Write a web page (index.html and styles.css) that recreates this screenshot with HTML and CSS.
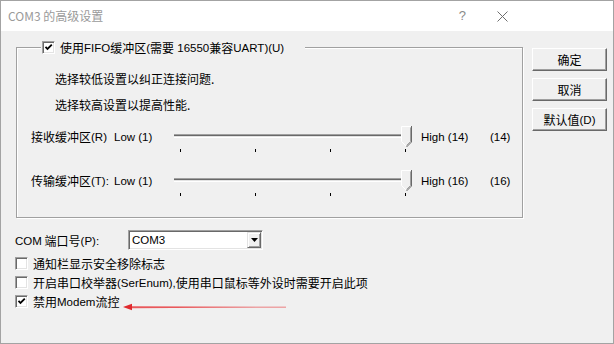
FILE: index.html
```html
<!DOCTYPE html>
<html lang="zh-CN">
<head>
    <meta charset="UTF-8">
    <title>COM3 的高级设置</title>
    <link rel="stylesheet" href="styles.css">
</head>
<body>
    <div class="window">
        <div class="titlebar">
            <span class="title">COM3 的高级设置</span>
            <span class="help">?</span>
            <span class="close">
                <svg width="11" height="11" viewBox="0 0 11 11"><path d="M0.5 0.5 L10.5 10.5 M10.5 0.5 L0.5 10.5" stroke="#6e6e6e" stroke-width="1" fill="none"/></svg>
            </span>
        </div>

        <div class="content">
            <div class="main">
                <fieldset class="group">
                    <legend class="group-title">
                        <span class="check checked">
                            <svg width="9" height="9" viewBox="0 0 9 9"><polyline points="1.5,3.8 3.5,6 7.8,1.6" fill="none" stroke="#000" stroke-width="1.8"/></svg>
                        </span>
                        <span>使用<span class="en">FIFO</span>缓冲区<span class="en">(</span>需要<span class="en"> 16550</span>兼容<span class="en">UART)(U)</span></span>
                    </legend>

                    <p class="hint first">选择较低设置以纠正连接问题.</p>
                    <p class="hint">选择较高设置以提高性能.</p>

                    <div class="slider-row first">
                        <span class="slider-label">接收缓冲区<span class="en">(R)</span></span>
                        <span class="low en">Low (1)</span>
                        <div class="slider">
                            <div class="track"></div>
                            <svg class="thumb" width="11" height="22" viewBox="0 0 11 22">
                                <polygon points="0.5,0.5 10.5,0.5 10.5,16 5.5,21 0.5,16" fill="#f0f0f0"/>
                                <polyline points="5.5,20.5 0.5,15.5 0.5,0.5 10,0.5" fill="none" stroke="#fff"/>
                                <polyline points="10.5,0 10.5,16 5.5,21" fill="none" stroke="#696969"/>
                                <polyline points="9.5,1.5 9.5,15.5 5.5,19.5" fill="none" stroke="#a0a0a0"/>
                            </svg>
                            <div class="ticks"><i></i><i></i><i></i><i></i></div>
                        </div>
                        <span class="high en">High (14)</span>
                        <span class="value en">(14)</span>
                    </div>

                    <div class="slider-row">
                        <span class="slider-label">传输缓冲区<span class="en">(T):</span></span>
                        <span class="low en">Low (1)</span>
                        <div class="slider">
                            <div class="track"></div>
                            <svg class="thumb" width="11" height="22" viewBox="0 0 11 22">
                                <polygon points="0.5,0.5 10.5,0.5 10.5,16 5.5,21 0.5,16" fill="#f0f0f0"/>
                                <polyline points="5.5,20.5 0.5,15.5 0.5,0.5 10,0.5" fill="none" stroke="#fff"/>
                                <polyline points="10.5,0 10.5,16 5.5,21" fill="none" stroke="#696969"/>
                                <polyline points="9.5,1.5 9.5,15.5 5.5,19.5" fill="none" stroke="#a0a0a0"/>
                            </svg>
                            <div class="ticks"><i></i><i></i><i></i><i></i></div>
                        </div>
                        <span class="high en">High (16)</span>
                        <span class="value en">(16)</span>
                    </div>
                </fieldset>

                <div class="port-row">
                    <span class="port-label"><span class="en">COM</span> 端口号<span class="en">(P):</span></span>
                    <div class="combo">
                        <span class="combo-text en">COM3</span>
                        <span class="combo-btn">
                            <svg width="7" height="4" viewBox="0 0 7 4"><polygon points="0,0 7,0 3.5,4" fill="#000"/></svg>
                        </span>
                    </div>
                </div>

                <div class="option first">
                    <span class="check"></span>
                    <span>通知栏显示安全移除标志</span>
                </div>
                <div class="option">
                    <span class="check"></span>
                    <span>开启串口校举器<span class="en">(SerEnum),</span>使用串口鼠标等外设时需要开启此项</span>
                </div>
                <div class="option marked">
                    <span class="check checked">
                        <svg width="9" height="9" viewBox="0 0 9 9"><polyline points="1.5,3.8 3.5,6 7.8,1.6" fill="none" stroke="#000" stroke-width="1.8"/></svg>
                    </span>
                    <span>禁用<span class="en">Modem</span>流控</span>
                    <!-- annotation arrow drawn over the dialog -->
                    <svg class="arrow" width="164" height="8" viewBox="0 0 164 8">
                        <path d="M8 3.2 L163 3.8 L163 4.4 L8 5.2 Z" fill="#e8474a" opacity="0.9"/>
                        <polygon points="0,4 9,0.8 9,7.2" fill="#e02a2e"/>
                    </svg>
                </div>
            </div>

            <div class="buttons">
                <div class="btn">确定</div>
                <div class="btn">取消</div>
                <div class="btn">默认值<span class="en">(D)</span></div>
            </div>
        </div>
    </div>
</body>
</html>
```

FILE: styles.css
```css
* {
    margin: 0;
    padding: 0;
    box-sizing: border-box;
}

body {
    font-family: "Noto Sans CJK SC", "Liberation Sans", sans-serif;
    font-size: 12px;
    color: #000;
    background-color: #fff;
}

/* latin runs use a smaller, narrower face like the dialog font */
.en {
    font-family: "Liberation Sans", "Noto Sans CJK SC", sans-serif;
    font-size: 11.5px;
    vertical-align: 1px;
}

.window {
    width: 614px;
    height: 344px;
    border: 1px solid #a3a3a3;
    background-color: #f0f0f0;
    display: flex;
    flex-direction: column;
}

/* title bar */
.titlebar {
    height: 30px;
    background: #fff;
    display: flex;
    align-items: center;
    padding-left: 7px;
}

.title {
    color: #9a9a9a;
    font-size: 12px;
    line-height: 16px;
}

.help {
    margin-left: auto;
    color: #8a8a8a;
    font-family: "Liberation Sans", sans-serif;
    font-size: 13px;
    line-height: 16px;
}

.close {
    display: flex;
    margin-left: 31px;
    margin-right: 105px;
}

/* body */
.content {
    display: flex;
    padding: 9px 0 0 15px;
}

.main {
    width: 507px;
}

.group {
    width: 507px;
    border: 1px solid #a0a0a0;
    box-shadow: 1px 1px 0 #fff, inset 1px 1px 0 #fff;
    padding: 0 0 3px 0;
    min-inline-size: 0;
}

.group-title {
    display: flex;
    align-items: center;
    gap: 5px;
    width: 264px;
    height: 15px;
    line-height: 15px;
    margin-left: 24px;
    padding-left: 1px;
    background: #f0f0f0;
}

.check {
    width: 13px;
    height: 13px;
    flex: none;
    display: flex;
    align-items: center;
    justify-content: center;
    background: #fff;
    border: 1px solid;
    border-color: #a0a0a0 #fff #fff #a0a0a0;
    box-shadow: inset 1px 1px 0 #696969, inset -1px -1px 0 #e3e3e3;
}

.hint {
    padding-left: 38px;
    line-height: 26px;
}

.hint.first {
    margin-top: 11px;
}

/* sliders */
.slider-row {
    display: flex;
    height: 44px;
    line-height: 22px;
    padding-left: 14px;
}

.slider-row.first {
    margin-top: 8px;
}

.slider-label {
    width: 83px;
}

.low {
    width: 60px;
}

.slider {
    position: relative;
    width: 238px;
    height: 30px;
}

.track {
    margin-top: 8px;
    width: 232px;
    height: 4px;
    background: linear-gradient(#a0a0a0 0 1px, #696969 1px 2px, #e3e3e3 2px 3px, #fff 3px 4px);
}

.thumb {
    position: absolute;
    left: 227px;
    top: 0;
}

.ticks {
    display: flex;
    gap: 74px;
    padding-left: 6px;
    margin-top: 11px;
}

.ticks i {
    width: 1px;
    height: 3px;
    background: #000;
}

.high {
    margin-left: 9px;
    width: 69px;
}

/* port selector */
.port-row {
    display: flex;
    align-items: center;
    height: 20px;
    margin-top: 12px;
    margin-left: -1px;
}

.port-label {
    width: 113px;
}

.combo {
    width: 135px;
    height: 20px;
    display: flex;
    align-items: center;
    background: #fff;
    border: 1px solid;
    border-color: #a0a0a0 #fff #fff #a0a0a0;
    box-shadow: inset 1px 1px 0 #696969, inset -1px -1px 0 #e3e3e3;
    padding: 1px;
}

.combo-text {
    padding-left: 2px;
    line-height: 16px;
}

.combo-btn {
    margin-left: auto;
    width: 14px;
    height: 16px;
    display: flex;
    align-items: center;
    justify-content: center;
    background: #f0f0f0;
    border: 1px solid;
    border-color: #e3e3e3 #696969 #696969 #e3e3e3;
    box-shadow: inset 1px 1px 0 #fff, inset -1px -1px 0 #a0a0a0;
}

/* check options */
.option {
    display: flex;
    align-items: center;
    gap: 5px;
    height: 19px;
    margin-left: -1px;
}

.option.first {
    margin-top: 4px;
}

.option.marked {
    position: relative;
}

.arrow {
    position: absolute;
    left: 108px;
    top: 11px;
}

/* buttons */
.buttons {
    display: flex;
    flex-direction: column;
    gap: 7px;
    margin-left: 9px;
    padding-top: 8px;
}

.btn {
    width: 75px;
    height: 23px;
    display: flex;
    align-items: center;
    justify-content: center;
    background: #f0f0f0;
    border: 1px solid;
    border-color: #fff #696969 #696969 #fff;
    box-shadow: inset -1px -1px 0 #a0a0a0;
}
```
